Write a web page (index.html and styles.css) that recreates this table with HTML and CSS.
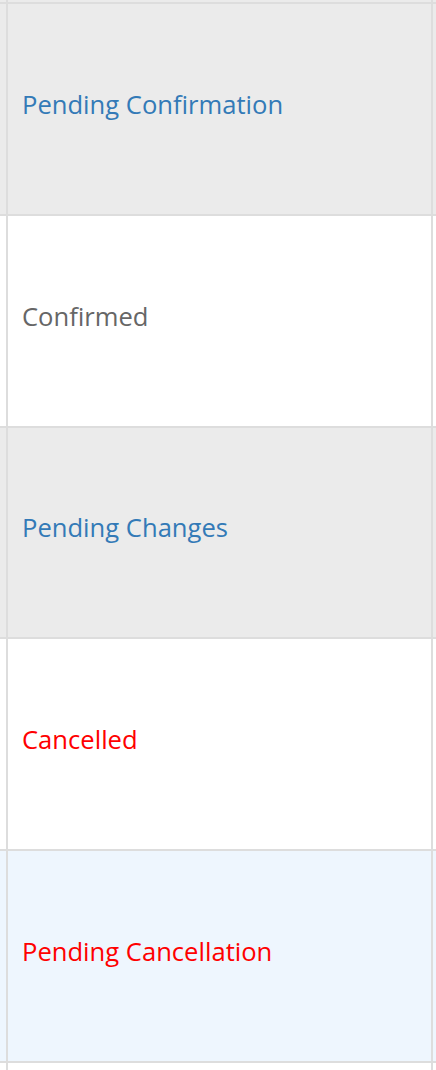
FILE: index.html
```html
<!DOCTYPE html>
<html>
<head>
<meta charset="utf-8">
<link rel="stylesheet" href="styles.css">
</head>
<body>
<div class="table">
  <div class="row row-gray top-strip"><div class="side"></div><div class="cell"></div><div class="side-r"></div></div>
  <div class="row row-gray"><div class="side"></div><div class="cell"><span class="st st-blue">Pending Confirmation</span></div><div class="side-r"></div></div>
  <div class="row row-white"><div class="side"></div><div class="cell"><span class="st st-gray">Confirmed</span></div><div class="side-r"></div></div>
  <div class="row row-gray"><div class="side"></div><div class="cell"><span class="st st-blue">Pending Changes</span></div><div class="side-r"></div></div>
  <div class="row row-white"><div class="side"></div><div class="cell"><span class="st st-red">Cancelled</span></div><div class="side-r"></div></div>
  <div class="row row-blue"><div class="side"></div><div class="cell"><span class="st st-red">Pending Cancellation</span></div><div class="side-r"></div></div>
  <div class="row row-white bottom-strip"><div class="side"></div><div class="cell"></div><div class="side-r"></div></div>
</div>
</body>
</html>
```
FILE: styles.css
```css
html, body {
  margin: 0;
  padding: 0;
  background: #fff;
}
body {
  width: 436px;
  height: 1070px;
  overflow: hidden;
  font-family: "Open Sans", "Liberation Sans", sans-serif;
}
.table {
  display: flex;
  flex-direction: column;
}
.row {
  display: flex;
  box-sizing: border-box;
  height: 211.8px;
  border-top: 2px solid #dddddd;
}
.top-strip {
  height: 2px;
  border-top: 0;
}
.bottom-strip {
  height: 20px;
}
.row-gray { background: #ebebeb; }
.row-white { background: #ffffff; }
.row-blue { background: #eef6fe; }
.side {
  width: 6px;
  flex: none;
  border-right: 2px solid #dddddd;
}
.side-r {
  flex: 1;
  border-left: 2px solid #dddddd;
}
.cell {
  width: 409px;
  flex: none;
  display: flex;
  align-items: center;
  padding-left: 14px;
  padding-bottom: 8px;
}
.st {
  font-size: 25.6px;
  line-height: 34px;
}
.st-blue { color: #337ab7; }
.st-gray { color: #666666; }
.st-red { color: #ff0000; }
```
